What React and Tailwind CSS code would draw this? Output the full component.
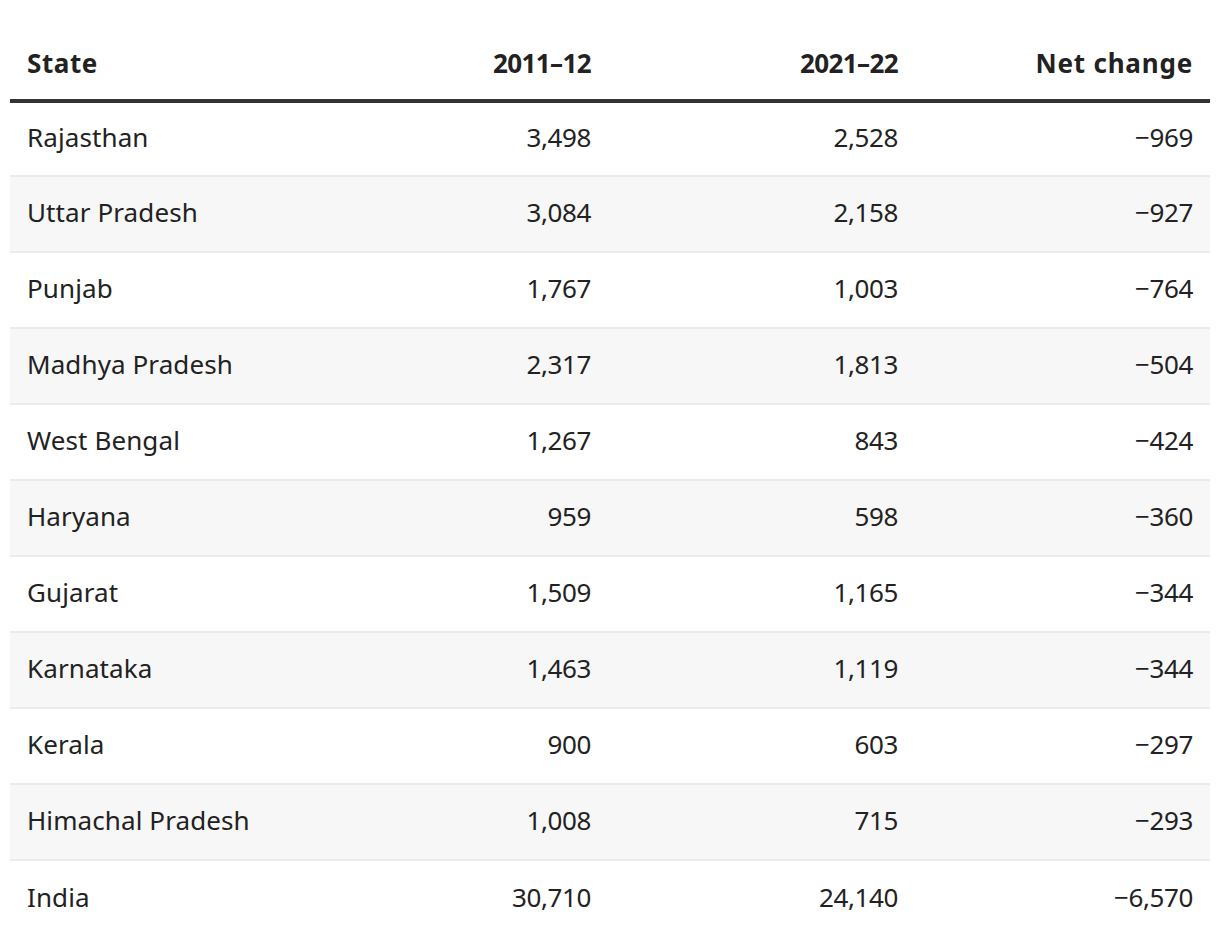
import React from "react";

const rows = [
  ["Rajasthan", "3,498", "2,528", "−969"],
  ["Uttar Pradesh", "3,084", "2,158", "−927"],
  ["Punjab", "1,767", "1,003", "−764"],
  ["Madhya Pradesh", "2,317", "1,813", "−504"],
  ["West Bengal", "1,267", "843", "−424"],
  ["Haryana", "959", "598", "−360"],
  ["Gujarat", "1,509", "1,165", "−344"],
  ["Karnataka", "1,463", "1,119", "−344"],
  ["Kerala", "900", "603", "−297"],
  ["Himachal Pradesh", "1,008", "715", "−293"],
  ["India", "30,710", "24,140", "−6,570"],
];

export default function App() {
  return (
    <div className="w-[1220px] h-[946px] bg-white overflow-hidden px-[10px] text-[#222] font-['Noto_Sans',sans-serif]">
      <div className="grid grid-cols-[290px_308px_307px_295px] h-[103px] border-b-4 border-[#333] pt-[28px] items-center text-[26px] font-bold">
        <div className="pl-[17px] tracking-[0.6px]">State</div>
        <div className="text-right pr-[17px] tracking-[-0.6px]">2011–12</div>
        <div className="text-right pr-[17px] tracking-[-0.6px]">2021–22</div>
        <div className="text-right pr-[17px] tracking-[0.8px]">Net change</div>
      </div>
      {rows.map((r, i) => (
        <div
          key={r[0]}
          className={
            "grid grid-cols-[290px_308px_307px_295px] items-center text-[26px] pb-[3px] " +
            (i === 0 ? "h-[74px] " : "h-[76px] ") +
            (i === rows.length - 1 ? "" : "border-b-2 border-[#ebebeb] ") +
            (i % 2 === 1 ? "bg-[#f7f7f7]" : "bg-white")
          }
        >
          <div className="pl-[17px] tracking-[0.1px]">{r[0]}</div>
          <div className="text-right pr-[17px] tracking-[-0.4px]">{r[1]}</div>
          <div className="text-right pr-[17px] tracking-[-0.4px]">{r[2]}</div>
          <div className="text-right pr-[17px] tracking-[-0.4px]">{r[3]}</div>
        </div>
      ))}
    </div>
  );
}
